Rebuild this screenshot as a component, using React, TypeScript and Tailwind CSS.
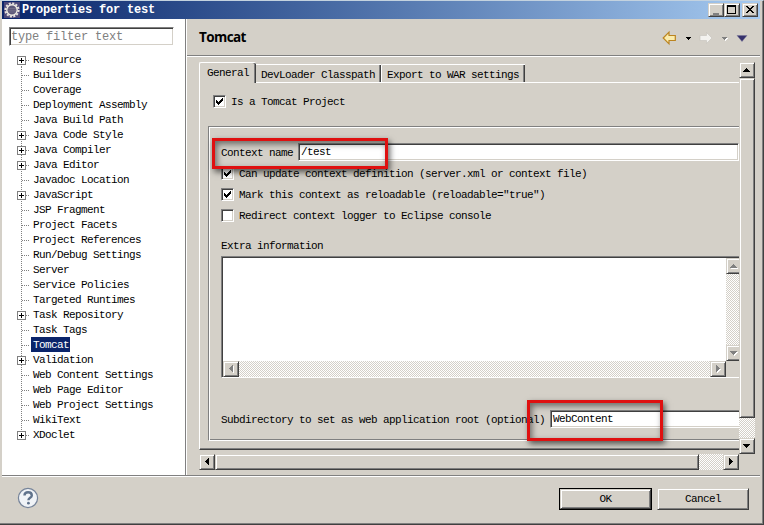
import type { ReactNode } from 'react';

type Dir = 'up' | 'down' | 'left' | 'right';

const TREE: [string, boolean][] = [
  ['Resource', true],
  ['Builders', false],
  ['Coverage', false],
  ['Deployment Assembly', false],
  ['Java Build Path', false],
  ['Java Code Style', true],
  ['Java Compiler', true],
  ['Java Editor', true],
  ['Javadoc Location', false],
  ['JavaScript', true],
  ['JSP Fragment', false],
  ['Project Facets', false],
  ['Project References', false],
  ['Run/Debug Settings', false],
  ['Server', false],
  ['Service Policies', false],
  ['Targeted Runtimes', false],
  ['Task Repository', true],
  ['Task Tags', false],
  ['Tomcat', false],
  ['Validation', true],
  ['Web Content Settings', false],
  ['Web Page Editor', false],
  ['Web Project Settings', false],
  ['WikiText', false],
  ['XDoclet', true],
];

const SUNKEN = 'border-t border-l border-r border-b border-t-[#808080] border-l-[#808080] border-r-white border-b-white shadow-[inset_1px_1px_0_#404040,inset_-1px_-1px_0_#d4d0c8]';
const RAISED = 'border border-t-[#d4d0c8] border-l-[#d4d0c8] border-r-[#404040] border-b-[#404040] bg-[#d4d0c8] shadow-[inset_1px_1px_0_#fff,inset_-1px_-1px_0_#808080]';
const TRACK = 'bg-[conic-gradient(#fff_25%,#d4d0c8_0_50%,#fff_0_75%,#d4d0c8_0)] bg-[length:2px_2px]';

const ARROWS: Record<Dir, string> = {
  up: 'M3 9h7v-1h-1v-1h-1v-1h-1v-1h-1v1h-1v1h-1v1h-1z',
  down: 'M3 5h7v1h-1v1h-1v1h-1v1h-1v-1h-1v-1h-1v-1h-1z',
  left: 'M9 3v7h-1v-1h-1v-1h-1v-1h-1v-1h1v-1h1v-1h1v-1z',
  right: 'M5 3v7h1v-1h1v-1h1v-1h1v-1h-1v-1h-1v-1h-1v-1z',
};

function ScrollButton({ dir, disabled = false }: { dir: Dir; disabled?: boolean }) {
  return (
    <div className={`h-4 w-4 shrink-0 ${RAISED}`}>
      <svg width="14" height="14" viewBox="0 0 14 14" shapeRendering="crispEdges" className="block">
        {disabled && <path d={ARROWS[dir]} fill="#fff" transform="translate(1 1)" />}
        <path d={ARROWS[dir]} fill={disabled ? '#808080' : '#000'} />
      </svg>
    </div>
  );
}

function Check({ checked, children }: { checked: boolean; children: ReactNode }) {
  return (
    <div className="flex h-[13px] items-center">
      <div className={`h-[13px] w-[13px] shrink-0 bg-white ${SUNKEN}`}>
        {checked && (
          <svg width="11" height="11" viewBox="0 0 11 11" shapeRendering="crispEdges" className="block">
            <path d="M2 4h1v1h1v1h1v-1h1v-1h1v-1h1v-1h1v3h-1v1h-1v1h-1v1h-1v1h-1v-1h-1v-1h-1z" fill="#000" />
          </svg>
        )}
      </div>
      <span className="ml-[5px] pt-px whitespace-pre">{children}</span>
    </div>
  );
}

function WindowButton({ children }: { children: ReactNode }) {
  return (
    <div className={`h-[14px] w-4 ${RAISED}`}>
      <svg width="14" height="12" viewBox="0 0 14 12" shapeRendering="crispEdges" className="block">{children}</svg>
    </div>
  );
}

function TitleBar() {
  return (
    <div className="mt-px ml-0.5 flex h-[18px] w-[758px] items-center bg-linear-to-r from-[#0a246a] to-[#a6caf0] pr-0.5 pl-0.5">
      <svg width="16" height="16" viewBox="0 0 16 16">
        <rect width="16" height="16" fill="#4b4778" />
        <circle cx="8" cy="8" r="6.6" fill="none" stroke="#e5e1db" strokeWidth="2" strokeDasharray="2.1 1.35" />
        <circle cx="8" cy="8" r="5.2" fill="#5c5878" stroke="#f2eee6" strokeWidth="1.4" />
        <path d="M4 6.5h8M3.6 8.3h8.8M4.2 10h7.6" stroke="#77728c" strokeWidth=".8" />
      </svg>
      <span className="ml-0.5 pt-px text-[12px] font-bold tracking-[-0.2px] whitespace-pre text-white">Properties for test</span>
      <div className="ml-auto flex">
        <WindowButton><path d="M4 9h6v2h-6z" fill="#808080" /></WindowButton>
        <WindowButton><path d="M2 1h9v9h-9zM3 3v6h7v-6z" fill="#000" fillRule="evenodd" /></WindowButton>
        <div className="ml-0.5">
          <WindowButton>
            <path d="M3 2h2v1h1v1h2v-1h1v-1h2v1h-1v1h-1v1h-1v1h1v1h1v1h1v1h-2v-1h-1v-1h-2v1h-1v1h-2v-1h1v-1h1v-1h1v-1h-1v-1h-1v-1h-1z" fill="#000" />
          </WindowButton>
        </div>
      </div>
    </div>
  );
}

function Tree() {
  return (
    <div className="mt-1.5">
      {TREE.map(([name, expandable], i) => (
        <div key={name} className="flex h-[15px]">
          <svg width="29" height="15" viewBox="0 0 29 15" shapeRendering="crispEdges" className="shrink-0">
            <path
              d={i === 0 ? 'M19.5 8V15' : i === TREE.length - 1 ? 'M19.5 0V8' : i % 2 ? 'M19.5 0V15' : 'M19.5 1V15'}
              stroke="#808080" strokeDasharray="1 1"
            />
            <path d="M20 8.5H28" stroke="#808080" strokeDasharray="1 1" />
            {expandable && (
              <>
                <rect x="15.5" y="4.5" width="8" height="8" fill="#fff" stroke="#808080" />
                <path d="M17 8.5h5M19.5 6v5" stroke="#000" />
              </>
            )}
          </svg>
          <span className={`h-[15px] pt-px pr-px pl-0.5 leading-[15px] whitespace-pre ${name === 'Tomcat' ? 'bg-[#0a246a] text-white' : ''}`}>{name}</span>
        </div>
      ))}
    </div>
  );
}

function Sidebar() {
  return (
    <div className="ml-0.5 h-[456px] w-[185px] shrink-0 border-r border-r-white bg-white">
      <div className="h-full w-[184px] border-r border-[#808080] pt-2">
        <div className={`ml-[7px] flex h-[19px] w-[165px] items-center bg-white pt-px pl-px whitespace-pre text-[#808080] ${SUNKEN}`}>
          <span className="text-[12px] tracking-[-0.2px]">type filter text</span>
        </div>
        <Tree />
      </div>
    </div>
  );
}

function Header() {
  return (
    <div className="flex h-[38px] w-[573px] items-center border-b border-b-white shadow-[inset_0_-1px_0_#808080]">
      <span className="ml-3 font-['Open_Sans',sans-serif] text-[13.5px] font-bold tracking-[-0.6px]">Tomcat</span>
      <svg width="90" height="16" viewBox="0 0 90 16" className="mr-[8px] ml-auto">
        <path d="M1.2 8 7 2.2V5.5h6.3v5H7v3.3z" fill="#fbecac" stroke="#bb8420" strokeWidth="1.2" />
        <path d="M24 7h5v1h-1v1h-1v1h-1v-1h-1v-1h-1z" fill="#000" />
        <path d="M50 8 44.5 2.5V5.5H38v5h6.5v3z" fill="#f3f2ef" stroke="#c4c1bb" strokeWidth=".6" />
        <path d="M61 8h5v1h-1v1h-1v1h-1v-1h-1v-1h-1z" fill="#fff" />
        <path d="M60 7h5v1h-1v1h-1v1h-1v-1h-1v-1h-1z" fill="#808080" />
        <path d="M75 5.5h10L80 11.5z" fill="#36316c" stroke="#777599" strokeWidth=".5" />
      </svg>
    </div>
  );
}

function Tabs() {
  return (
    <div className="flex h-[21px] items-end">
      <div className="h-[21px] w-[57px] rounded-t-[2px] border-t border-l border-t-white border-l-white pt-[3px] pl-[7px] leading-[15px] shadow-[inset_-1px_0_0_#404040,inset_-2px_0_0_#808080]">General</div>
      <div className="flex h-[19px] flex-1 border-b border-b-white">
        <div className="w-[125px] border-t border-t-white pt-[3px] pl-[5px] leading-[15px] whitespace-pre shadow-[inset_-1px_0_0_#404040,inset_-2px_0_0_#808080]">DevLoader Classpath</div>
        <div className="w-[144px] rounded-tl-[2px] border-t border-l border-t-white border-l-white pt-[3px] pl-[5px] leading-[15px] whitespace-pre shadow-[inset_-1px_0_0_#404040,inset_-2px_0_0_#808080]">Export to WAR settings</div>
      </div>
    </div>
  );
}

function ExtraInformation() {
  return (
    <div className="mt-[3px] flex h-[122px] border-t border-b border-l border-t-[#808080] border-b-white border-l-[#808080] bg-white shadow-[inset_1px_1px_0_#404040]">
      <div className="flex w-[504px] flex-col pt-px pl-px">
        <div className="flex-1" />
        <div className={`flex h-4 justify-between ${TRACK}`}>
          <ScrollButton dir="left" disabled />
          <ScrollButton dir="right" disabled />
        </div>
      </div>
      <div className="w-[13px] overflow-hidden pt-px">
        <div className={`flex h-[103px] w-4 flex-col justify-between ${TRACK}`}>
          <ScrollButton dir="up" disabled />
          <ScrollButton dir="down" disabled />
        </div>
        <div className="h-4 bg-[#d4d0c8]" />
      </div>
    </div>
  );
}

function SettingsPage() {
  return (
    <div className="h-[392px] w-[540px] overflow-hidden">
      <Tabs />
      <div className="h-[367px] border-b border-l border-b-[#404040] border-l-white pt-3 pl-[9px] shadow-[inset_0_-1px_0_#808080]">
        <div className="ml-1"><Check checked>Is a Tomcat Project</Check></div>
        <div className="mt-[18px] -ml-px h-[315px] border border-r-0 border-t-[#808080] border-b-white border-l-[#808080] pl-3 shadow-[inset_1px_1px_0_#fff,inset_0_-1px_0_#808080]">
          <div className="flex items-center pt-4">
            <span className="w-[77px] pt-0.5 whitespace-pre">Context name</span>
            <div className={`flex h-[18px] flex-1 items-center bg-white pt-px pl-0.5 ${SUNKEN}`}>/test</div>
          </div>
          <div className="mt-1.5 flex flex-col gap-2">
            <Check checked>Can update context definition (server.xml or context file)</Check>
            <Check checked>Mark this context as reloadable (reloadable="true")</Check>
            <Check checked={false}>Redirect context logger to Eclipse console</Check>
          </div>
          <div className="mt-4 h-[15px] pt-px leading-[15px] whitespace-pre">Extra information</div>
          <ExtraInformation />
          <div className="mt-8 flex items-center">
            <span className="w-[329px] pt-0.5 whitespace-pre">Subdirectory to set as web application root (optional)</span>
            <div className="flex h-[18px] flex-1 items-center border-t border-b border-l border-t-[#808080] border-b-white border-l-[#808080] bg-white pt-px pl-0.5 shadow-[inset_1px_1px_0_#404040,inset_0_-1px_0_#d4d0c8]">WebContent</div>
          </div>
        </div>
      </div>
    </div>
  );
}

function Footer() {
  return (
    <div className="ml-0.5 flex h-12 w-[758px] border-t border-t-[#808080] pt-3 shadow-[inset_0_1px_0_#fff]">
      <svg width="22" height="22" viewBox="0 0 22 22" className="-mt-px ml-[15px]">
        <circle cx="11" cy="11" r="9.6" fill="#f0f3f7" stroke="#76849a" strokeWidth="1.2" />
        <path d="M7.5 8.6C7.5 6.3 9 5.3 11.1 5.3s3.7 1.1 3.7 3.1c0 2.5-3.4 2.4-3.4 4.9" fill="none" stroke="#60738c" strokeWidth="2.4" />
        <circle cx="11.4" cy="16.2" r="1.4" fill="#60738c" />
      </svg>
      <div className="ml-auto h-[22px] w-[93px] border border-black">
        <div className={`flex h-5 items-center justify-center ${RAISED}`}>OK</div>
      </div>
      <div className={`mr-[11px] ml-[5px] flex h-[22px] w-[92px] items-center justify-center ${RAISED}`}>Cancel</div>
    </div>
  );
}

export default function App() {
  return (
    <div className="relative flex h-[525px] w-[764px] flex-col overflow-hidden border-t border-r border-b border-t-[#c3d2df] border-r-[#404040] border-b-[#404040] bg-[#d4d0c8] font-['Liberation_Mono',monospace] text-[11px] leading-[13px] tracking-[-0.6px] text-black shadow-[inset_-1px_-1px_0_#808080]">
      <div className="-mt-px"><TitleBar /></div>
      <div className="flex h-[456px]">
        <Sidebar />
        <div>
          <Header />
          <div className="mt-[5px] ml-3 flex">
            <SettingsPage />
            <div className={`flex h-[392px] w-4 flex-col ${TRACK}`}>
              <ScrollButton dir="up" />
              <div className={`h-[340px] ${RAISED}`} />
              <div className="flex-1" />
              <ScrollButton dir="down" />
            </div>
          </div>
          <div className={`ml-3 flex h-4 w-[540px] ${TRACK}`}>
            <ScrollButton dir="left" />
            <div className={`w-[484px] ${RAISED}`} />
            <div className="flex-1" />
            <ScrollButton dir="right" />
          </div>
        </div>
      </div>
      <Footer />
      <div className="absolute top-[137px] left-[212px] h-[31px] w-[176px] border-3 border-[#df1010] shadow-[2px_3px_6px_rgba(0,0,0,.6),inset_2px_3px_6px_rgba(0,0,0,.5)]" />
      <div className="absolute top-[399px] left-[527px] h-[41px] w-[136px] border-3 border-[#df1010] shadow-[2px_3px_6px_rgba(0,0,0,.6),inset_2px_3px_6px_rgba(0,0,0,.5)]" />
    </div>
  );
}
